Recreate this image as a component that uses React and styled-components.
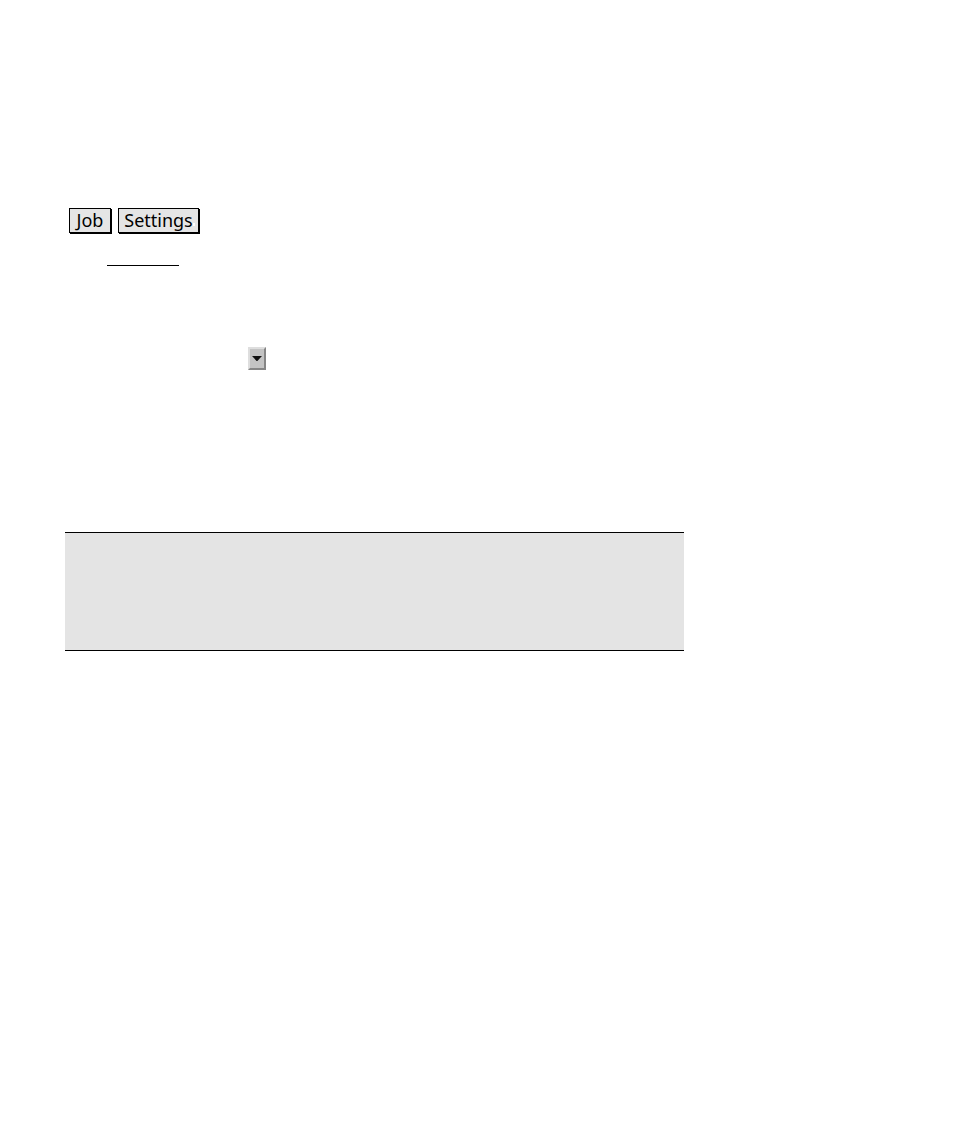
import React from "react";
import styled, { createGlobalStyle } from "styled-components";

const GlobalStyle = createGlobalStyle`
  * { box-sizing: border-box; }
  body { margin: 0; background: #fff; color: #000; }
`;

const Page = styled.main`
  display: flex;
  flex-direction: column;
  align-items: flex-start;
  padding: 208px 65px 64px;
`;

const Trail = styled.nav`
  display: flex;
  flex-wrap: wrap;
  gap: 7px;
  padding-left: 4px;
`;

const KeyButton = styled.button`
  position: relative;
  height: 25px;
  padding: 0 5px 1px;
  border: 1px solid #000;
  border-radius: 0;
  background: #e5e5e5;
  box-shadow: 1px 1px 0 #000;
  color: #000;
  font: 18px/22px "Noto Sans", sans-serif;
  min-width: ${(p) => p.$width}px;
  white-space: nowrap;
`;

const Speck = styled.span`
  position: absolute;
  right: 3px;
  bottom: 6px;
  width: 2px;
  height: 3px;
  background: #fff;
`;

const Rule = styled.hr`
  width: 72px;
  height: 1px;
  margin: 32px 0 0 42px;
  border: 0;
  background: #000;
`;

const ArrowButton = styled.button`
  display: flex;
  align-items: center;
  justify-content: center;
  width: 18px;
  height: 23px;
  margin: 81px 0 0 183px;
  padding: 0;
  border: 2px solid;
  border-color: #dedede #858585 #858585 #dedede;
  border-radius: 0;
  background: #c3c3c3;
`;

const Panel = styled.section`
  width: 100%;
  max-width: 619px;
  min-height: 119px;
  margin-top: 162px;
  border-top: 1px solid #000;
  border-bottom: 1px solid #000;
  background: #e4e4e4;
`;

export default function App() {
  return (
    <>
      <GlobalStyle />
      <Page>
        <Trail>
          <KeyButton type="button" $width={42}>Job</KeyButton>
          <KeyButton type="button" $width={81}>
            Settings
            <Speck />
          </KeyButton>
        </Trail>
        <Rule />
        <ArrowButton type="button" aria-label="Open list">
          <svg width="10" height="5" viewBox="0 0 10 5" aria-hidden="true">
            <path d="M0.5 0H9.5V0.6L5.4 5H4.6L0.5 0.6Z" fill="#111" />
          </svg>
        </ArrowButton>
        <Panel />
      </Page>
    </>
  );
}
